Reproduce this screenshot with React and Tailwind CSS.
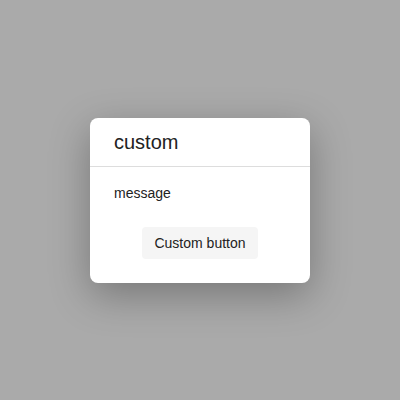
import React from 'react';

const App = () => {
    return (
        <div className="w-[400px] h-[400px] bg-[#aaaaaa] flex items-center justify-center font-['Liberation_Sans',Arial,sans-serif] text-[#222]">
            <div className="w-[220px] bg-white rounded-lg shadow-[0_12px_40px_rgba(0,0,0,0.3)]">
                {/* Header */}
                <div className="h-[49px] px-6 flex items-center border-b border-[#dddddd]">
                    <h2 className="text-[20px] leading-6">custom</h2>
                </div>
                {/* Body */}
                <div className="px-6 pt-4 pb-6">
                    <p className="text-sm leading-5">message</p>
                    <div className="mt-6 flex justify-center">
                        <button className="h-8 px-3 rounded bg-[#f5f5f5] text-sm text-[#222]">
                            Custom button
                        </button>
                    </div>
                </div>
            </div>
        </div>
    );
};

export default App;
